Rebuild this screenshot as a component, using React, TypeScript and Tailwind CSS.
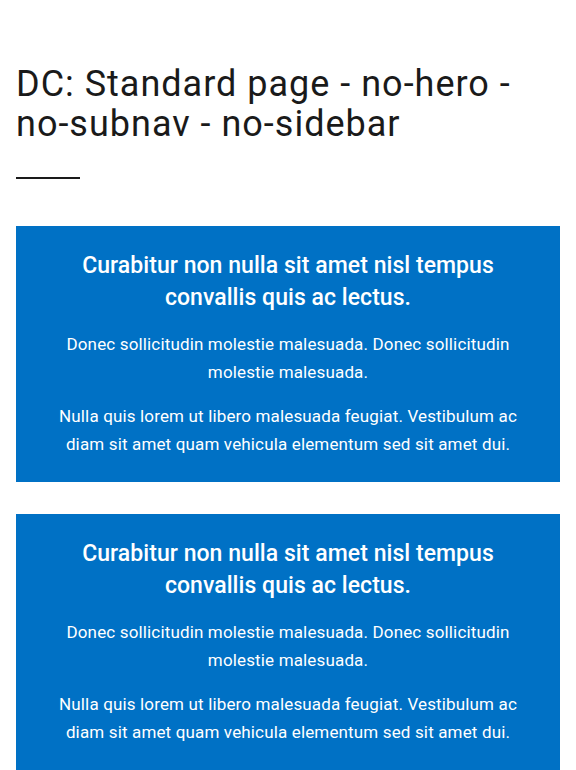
import React from "react";

function Card() {
  return (
    <div className="bg-[#0071c5] px-10 pt-6 pb-6 text-center text-white">
      <h2 className="text-[23px] leading-[32px] font-medium tracking-[0.05px]">
        Curabitur non nulla sit amet nisl tempus convallis quis ac lectus.
      </h2>
      <p className="mt-4 text-[17px] leading-[28px] tracking-[0.15px]">
        Donec sollicitudin molestie malesuada. Donec sollicitudin molestie malesuada.
      </p>
      <p className="mt-4 text-[17px] leading-[28px] tracking-[0.15px]">
        Nulla quis lorem ut libero malesuada feugiat. Vestibulum ac diam sit amet quam vehicula elementum sed sit amet dui.
      </p>
    </div>
  );
}

export default function App() {
  return (
    <div className="min-h-[770px] bg-white px-4 pt-[64px] font-['Roboto',sans-serif] text-[#1a1a1a]">
      <h1 className="text-[36px] leading-[40px] font-normal tracking-[1px]">
        DC: Standard page - no-hero - no-subnav - no-sidebar
      </h1>
      <div className="mt-[33px] h-[2px] w-16 bg-[#1a1a1a]" />
      <div className="mt-[47px] flex flex-col gap-8">
        <Card />
        <Card />
      </div>
    </div>
  );
}
